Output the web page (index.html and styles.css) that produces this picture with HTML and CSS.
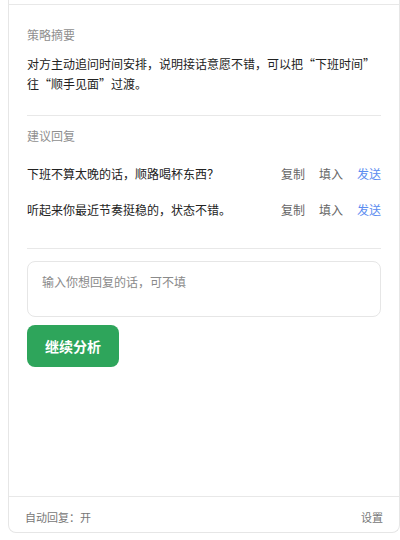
FILE: index.html
```html
<!DOCTYPE html>
<html lang="zh-CN">
<head>
<meta charset="utf-8">
<title>策略摘要</title>
<link rel="stylesheet" href="styles.css">
</head>
<body>
<div class="card">
  <div class="card-top"></div>
  <main class="card-body">
    <section class="section summary">
      <div class="label">策略摘要</div>
      <p class="summary-text">对方主动追问时间安排，说明接话意愿不错，可以把“下班时间”往“顺手见面”过渡。</p>
    </section>
    <section class="section replies">
      <div class="label">建议回复</div>
      <div class="reply-list">
        <div class="reply-row">
          <span class="reply-text">下班不算太晚的话，顺路喝杯东西？</span>
          <span class="actions"><a class="action">复制</a><a class="action">填入</a><a class="action send">发送</a></span>
        </div>
        <div class="reply-row">
          <span class="reply-text">听起来你最近节奏挺稳的，状态不错。</span>
          <span class="actions"><a class="action">复制</a><a class="action">填入</a><a class="action send">发送</a></span>
        </div>
      </div>
    </section>
    <section class="compose">
      <textarea class="input" placeholder="输入你想回复的话，可不填"></textarea>
      <button class="primary">继续分析</button>
    </section>
  </main>
  <footer class="card-footer">
    <span>自动回复：开</span>
    <a class="settings">设置</a>
  </footer>
</div>
</body>
</html>
```

FILE: styles.css
```css
* { box-sizing: border-box; }

html, body {
  margin: 0;
  padding: 0;
  background: #fff;
}

body {
  font-family: "Noto Sans CJK SC", "Noto Sans", sans-serif;
  color: #222;
  padding-left: 8px;
}

.card {
  width: 392px;
  height: 533px;
  border: 1px solid #e6e6e6;
  border-top: none;
  border-radius: 0 0 8px 8px;
  display: flex;
  flex-direction: column;
  background: #fff;
}

.card-top {
  height: 5px;
  border-bottom: 1px solid #e8e8e8;
  flex: none;
}

.card-body {
  flex: 1;
  padding: 0 18px;
}

.section {
  border-bottom: 1px solid #e8e8e8;
}

.label {
  font-size: 12px;
  line-height: 20px;
  color: #8f8f8f;
}

.summary {
  padding: 20px 0 21px;
}

.summary-text {
  margin: 9px 0 0;
  font-size: 12px;
  line-height: 20px;
  color: #222;
}

.replies {
  padding: 10px 0 28px;
}

.reply-list {
  margin-top: 18px;
  display: flex;
  flex-direction: column;
  gap: 16px;
}

.reply-row {
  display: flex;
  align-items: center;
  font-size: 12px;
  line-height: 20px;
}

.reply-text {
  flex: 1;
  color: #222;
}

.actions {
  display: flex;
  gap: 14px;
}

.action {
  color: #666;
  cursor: pointer;
}

.action.send {
  color: #5b8cf0;
}

.compose {
  padding-top: 12px;
  display: flex;
  flex-direction: column;
  align-items: flex-start;
  gap: 8px;
}

.input {
  display: block;
  width: 100%;
  height: 56px;
  border: 1px solid #e6e6e6;
  border-radius: 8px;
  padding: 11px 14px;
  font-family: inherit;
  font-size: 12px;
  line-height: 18px;
  color: #222;
  resize: none;
  outline: none;
  margin: 0;
}

.input::placeholder {
  color: #8a8a8a;
}

.primary {
  width: 92px;
  height: 42px;
  border: none;
  border-radius: 8px;
  background: #2ea55b;
  color: #fff;
  font-family: inherit;
  font-size: 14px;
  font-weight: 700;
  padding: 0;
  cursor: pointer;
}

.card-footer {
  flex: none;
  height: 36px;
  border-top: 1px solid #e8e8e8;
  padding: 12px 16px 0;
  display: flex;
  justify-content: space-between;
  font-size: 11px;
  line-height: 16px;
  color: #777;
}

.settings {
  color: #777;
  cursor: pointer;
}
```
